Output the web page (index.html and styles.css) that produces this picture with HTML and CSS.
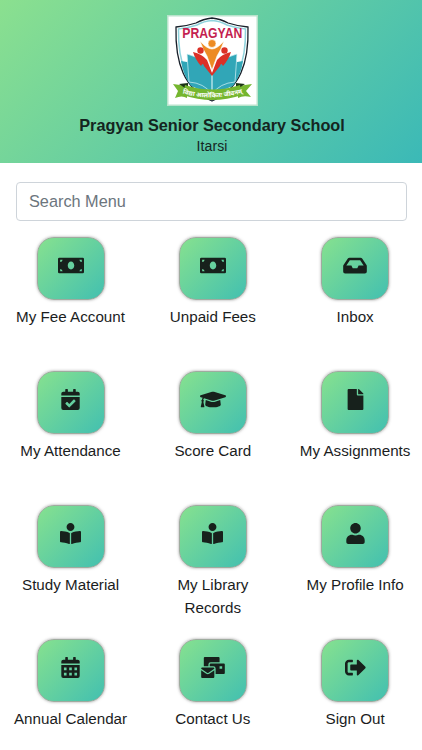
FILE: index.html
```html
<!DOCTYPE html>
<html lang="en">
<head>
<meta charset="utf-8">
<meta name="viewport" content="width=device-width, initial-scale=1">
<title>Pragyan Senior Secondary School</title>
<link rel="stylesheet" href="styles.css">
</head>
<body>
<svg class="defs" aria-hidden="true">
  <symbol id="money" viewBox="0 0 640 512"><path fill-rule="evenodd" d="M32 64H608Q640 64 640 96V416Q640 448 608 448H32Q0 448 0 416V96Q0 64 32 64ZM54 112V168Q106 164 114 112ZM586 112H526Q534 164 586 168ZM54 400H114Q106 348 54 344ZM586 400V344Q534 348 526 400ZM320 160C274 160 240 203 240 256S274 352 320 352S400 309 400 256S366 160 320 160Z"/></symbol>
  <symbol id="inbox" viewBox="0 0 576 512"><path d="M567.938 243.908L462.25 85.374A48.003 48.003 0 0 0 422.311 64H153.689a48 48 0 0 0-39.938 21.374L8.062 243.908A47.994 47.994 0 0 0 0 270.533V400c0 26.51 21.49 48 48 48h480c26.51 0 48-21.49 48-48V270.533a47.994 47.994 0 0 0-8.062-26.625zM162.252 128h251.497l85.333 128H376l-32 64H232l-32-64H76.918l85.334-128z"/></symbol>
  <symbol id="check" viewBox="0 0 448 512"><path fill-rule="evenodd" d="M0 160v-48q0-48 48-48h48V12q0-12 12-12h40q12 0 12 12v52h128V12q0-12 12-12h40q12 0 12 12v52h48q48 0 48 48v48ZM0 192h448v272q0 48-48 48H48q-48 0-48-48ZM345 286l-28-28q-8-8-17 0L194 364l-46-46q-8-8-17 0l-28 28q-8 8 0 17l82 83q9 8 17 0l143-143q8-8 0-17Z"/></symbol>
  <symbol id="cap" viewBox="0 0 640 512"><path d="M622.34 153.2L343.4 67.5c-15.2-4.67-31.6-4.67-46.79 0L17.66 153.2c-23.54 7.23-23.54 38.36 0 45.59l48.63 14.94c-10.67 13.19-17.23 29.28-17.88 46.9C38.78 266.15 32 276.11 32 288c0 10.78 5.68 19.85 13.86 25.65L20.33 428.53C18.11 438.52 25.71 448 35.94 448h56.11c10.24 0 17.84-9.48 15.62-19.47L82.14 313.65C90.32 307.85 96 298.78 96 288c0-11.57-6.47-21.25-15.66-26.87.76-15.02 8.44-28.3 20.69-36.72L296.6 284.5c9.06 2.78 26.44 6.25 46.79 0l278.95-85.7c23.55-7.24 23.55-38.36 0-45.6zM352.79 315.09c-28.53 8.76-52.84 3.92-65.59 0l-145.02-44.55L128 384c0 35.35 85.96 64 192 64s192-28.65 192-64l-14.18-113.47-145.03 44.56z"/></symbol>
  <symbol id="file" viewBox="0 0 384 512"><path d="M224 136V0H24Q0 0 0 24v464q0 24 24 24h336q24 0 24-24V160H248q-24 0-24-24ZM384 122v6H256V0h6q10 0 17 7l98 98q7 7 7 17Z"/></symbol>
  <symbol id="reader" viewBox="0 0 512 512"><path d="M352 96c0-53.02-42.98-96-96-96s-96 42.98-96 96 42.98 96 96 96 96-42.98 96-96zM233.59 241.1c-59.33-36.32-155.43-46.3-203.79-49.05C13.55 191.13 0 203.51 0 219.14v222.8c0 14.33 11.59 26.28 26.49 27.05 43.66 2.29 131.99 10.68 193.04 41.43 9.37 4.72 20.48-1.71 20.48-11.87V252.56c-.01-4.67-2.32-8.95-6.42-11.46zm248.61-49.05c-48.35 2.74-144.46 12.73-203.78 49.05-4.1 2.51-6.41 6.96-6.41 11.63v245.79c0 10.19 11.14 16.63 20.54 11.9 61.04-30.72 149.32-39.11 192.97-41.4 14.9-.78 26.49-12.73 26.49-27.06V219.14c-.01-15.63-13.56-28.01-29.81-27.09z"/></symbol>
  <symbol id="user" viewBox="0 0 448 512"><path d="M224 256c70.7 0 128-57.3 128-128S294.7 0 224 0 96 57.3 96 128s57.3 128 128 128zm89.6 32h-16.7c-22.2 10.2-46.9 16-72.9 16s-50.6-5.8-72.9-16h-16.7C60.2 288 0 348.2 0 422.4V464c0 26.5 21.5 48 48 48h352c26.5 0 48-21.5 48-48v-41.6c0-74.2-60.2-134.4-134.4-134.4z"/></symbol>
  <symbol id="calendar" viewBox="0 0 448 512"><path fill-rule="evenodd" d="M0 160v-48q0-48 48-48h48V12q0-12 12-12h40q12 0 12 12v52h128V12q0-12 12-12h40q12 0 12 12v52h48q48 0 48 48v48ZM0 192h448v272q0 48-48 48H48q-48 0-48-48ZM64 256v64h64v-64ZM192 256v64h64v-64ZM320 256v64h64v-64ZM64 384v64h64v-64ZM192 384v64h64v-64ZM320 384v64h64v-64Z"/></symbol>
  <symbol id="mail" viewBox="0 0 576 512"><path fill-rule="evenodd" d="M64 224V24Q64 0 88 0H424Q448 0 448 24V128H232Q176 128 176 184V224ZM208 224V184Q208 160 232 160H552Q576 160 576 184V392Q576 416 552 416H352V280Q352 224 296 224ZM448 224V288H512V224ZM0 286V280Q0 256 24 256H296Q320 256 320 280V286L178 382Q160 394 142 382ZM0 326 124 409Q160 433 196 409L320 326V488Q320 512 296 512H24Q0 512 0 488Z"/></symbol>
  <symbol id="exit" viewBox="0 0 512 512"><path d="M497 273 329 441c-15 15-41 4.500-41-17v-96H152c-13 0-24-11-24-24v-96c0-13 11-24 24-24h136V88c0-21 26-32 41-17l168 168c9 10 9 24 0 34ZM192 436v-40c0-7-5-12-12-12H96c-18 0-32-14-32-32V160c0-18 14-32 32-32h84c7 0 12-5 12-12V76c0-7-5-12-12-12H96C43 64 0 107 0 160v192c0 53 43 96 96 96h84c7 0 12-5 12-12Z"/></symbol>
</svg>

<header class="hero">
  <svg class="logo" viewBox="0 0 91 91" role="img" aria-label="Pragyan school crest">
    <rect width="91" height="91" fill="#b9e3cc"/>
    <rect x="1.500" y="1.500" width="88" height="88" fill="#fff"/>
    <path d="M45 3Q36 4 29 8Q20 11 9 12C8 48 17 74 45 86C73 74 82 48 81 12Q70 11 61 8Q54 4 45 3Z" fill="#fff" stroke="#17202a" stroke-width="1.300"/>
    <path d="M45 5.500Q37 6 30 10Q21 13 11.500 14C11 47 19 71 45 83C71 71 79 47 78.500 14Q69 13 60 10Q53 6 45 5.500Z" fill="#fff" stroke="#8fd3dd" stroke-width="1.500"/>
    <path d="M14 46L20 47L22 43Q37 46 45 59Q53 46 68 43L70 47L76 46Q74 60 66 71L45 79L24 71Q16 60 14 46Z" fill="#31a6b7"/>
    <path d="M20 39Q37 43 45 59V79Q37 68 22 67ZM70 39Q53 43 45 59V79Q53 68 68 67Z" fill="#31a6b7" stroke="#d9f3f6" stroke-width=".7"/>
    <path d="M26 37Q35 39 40 45L45 58L50 45Q55 39 64 37Q62 44 56 51Q54 47 53 51L45 61L37 51Q36 47 34 51Q28 44 26 37Z" fill="#db3027"/>
    <path d="M33 26Q40 34 45 34T57 26Q54 35 50 41L45 55L40 41Q36 35 33 26Z" fill="#ed8b23" stroke="#fff" stroke-width=".6"/>
    <circle cx="45" cy="28.500" r="4" fill="#ed8b23" stroke="#fff" stroke-width=".6"/>
    <circle cx="33.500" cy="35.500" r="3.200" fill="#db3027"/>
    <circle cx="57.500" cy="35.500" r="3.200" fill="#db3027"/>
    <path d="M6 69L20 71V83Q15 80 8 83L11 76ZM85 69L71 71V83Q76 80 84 82L79 76Z" fill="#75b62f"/>
    <path d="M12 69L21 68V75ZM78 69L69 68V75Z" fill="#1c3515"/>
    <path d="M18 70Q45 79 73 70L75 80Q45 90 16 80Z" fill="#75b62f"/>
    <path id="motto" d="M17 79Q45 86 74 78.500" fill="none"/>
    <text class="crest-name" x="45.300" y="23.300" textLength="60" lengthAdjust="spacingAndGlyphs">PRAGYAN</text>
    <text class="crest-motto"><textPath href="#motto" startOffset="50%">विद्या आलोकितः जीवनम्</textPath></text>
  </svg>
  <h1>Pragyan Senior Secondary School</h1>
  <p>Itarsi</p>
</header>

<main>
  <input class="search" type="text" placeholder="Search Menu" aria-label="Search Menu">
  <nav class="menu">
    <a class="item"><span class="tile"><svg class="w640"><use href="#money"/></svg></span><span>My Fee Account</span></a>
    <a class="item"><span class="tile"><svg class="w640"><use href="#money"/></svg></span><span>Unpaid Fees</span></a>
    <a class="item"><span class="tile"><svg class="w576"><use href="#inbox"/></svg></span><span>Inbox</span></a>
    <a class="item"><span class="tile"><svg><use href="#check"/></svg></span><span>My Attendance</span></a>
    <a class="item"><span class="tile"><svg class="w640"><use href="#cap"/></svg></span><span>Score Card</span></a>
    <a class="item"><span class="tile"><svg><use href="#file"/></svg></span><span>My Assignments</span></a>
    <a class="item"><span class="tile"><svg><use href="#reader"/></svg></span><span>Study Material</span></a>
    <a class="item"><span class="tile"><svg><use href="#reader"/></svg></span><span>My Library<br>Records</span></a>
    <a class="item"><span class="tile"><svg><use href="#user"/></svg></span><span>My Profile Info</span></a>
    <a class="item"><span class="tile"><svg><use href="#calendar"/></svg></span><span>Annual Calendar</span></a>
    <a class="item"><span class="tile"><svg class="w576"><use href="#mail"/></svg></span><span>Contact Us</span></a>
    <a class="item"><span class="tile"><svg><use href="#exit"/></svg></span><span>Sign Out</span></a>
  </nav>
</main>
</body>
</html>
```
FILE: styles.css
```css
* { box-sizing: border-box; }
body {
  margin: 0;
  height: 750px;
  overflow: hidden;
  background: #fff;
  color: #1b1d1e;
  font: 15.2px/23px "Liberation Sans", Arial, sans-serif;
}
.defs { display: none; }
.hero {
  display: flex;
  flex-direction: column;
  align-items: center;
  height: 163px;
  padding-top: 15px;
  padding-left: 2px;
  background: linear-gradient(135deg, #8be08f, #3bb9b7);
  color: #14251f;
}
.logo { display: block; flex: none; width: 91px; height: 91px; }
.crest-name {
  font: bold 14px "Liberation Sans", Arial, sans-serif;
  text-anchor: middle;
  fill: #c41f50;
}
.crest-motto {
  font: bold 6.4px "Noto Sans", sans-serif;
  text-anchor: middle;
  fill: #fff;
}
h1 { margin: 7px 0 0; font-size: 16.25px; line-height: 24px; }
.hero p { margin: 0; font-size: 14px; line-height: 18px; letter-spacing: .1px; }
main { padding: 19px 0 0; }
.search {
  display: block;
  width: 391px;
  height: 39px;
  margin: 0 0 0 15.5px;
  padding: 0 12.5px;
  border: 1px solid #ced4da;
  border-radius: 4px;
  outline: 0;
  background: #fff;
  font: 16.3px "Liberation Sans", Arial, sans-serif;
}
.search::placeholder { color: #6c757d; opacity: 1; }
.menu {
  display: grid;
  grid-template-columns: repeat(3, 142.3px);
  grid-auto-rows: 134px;
  width: 427px;
  margin: 16px 0 0 -.6px;
}
.item {
  display: flex;
  flex-direction: column;
  align-items: center;
  text-align: center;
}
.tile {
  display: flex;
  justify-content: center;
  width: 68px;
  height: 63px;
  margin-bottom: 5px;
  padding-top: 17px;
  border: 1px solid #9fab9f;
  border-radius: 17px;
  background: linear-gradient(135deg, #86e18f, #43c0b0);
  box-shadow: 0 0 3px rgba(80, 80, 80, .55);
}
.tile svg { display: block; width: 21px; height: 21px; fill: #17211c; }
.tile .w640 { width: 26px; }
.tile .w576 { width: 24px; }
```
